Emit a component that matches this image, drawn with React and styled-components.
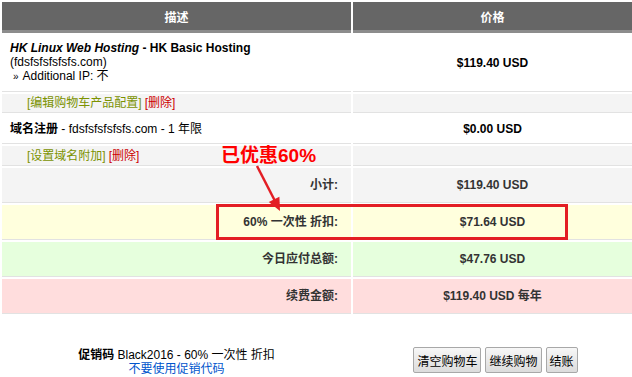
import { Fragment } from "react";
import styled, { createGlobalStyle } from "styled-components";

const GlobalStyle = createGlobalStyle`
  html, body {
    margin: 0;
    padding: 0;
    background: #fff;
    overflow: hidden;
  }
  body {
    font-family: "Liberation Sans", Arial, "Noto Sans CJK SC", sans-serif;
    font-size: 12px;
    color: #000;
  }
`;

const Page = styled.div`
  position: relative;
  width: 632px;
  height: 377px;
`;

const Cart = styled.div`
  display: grid;
  grid-template-columns: 349px 279px;
  gap: 2px;
  padding: 2px 0 0 2px;
`;

const HeadCell = styled.div`
  height: 28px;
  background: #666;
  border-bottom: 3px solid #8c8c8c;
  color: #fff;
  font-weight: bold;
  display: flex;
  align-items: center;
  justify-content: center;
  font-size: 12px;
`;

const Cell = styled.div`
  background: ${(p) => p.$bg || "#fff"};
  border-bottom: 1px solid #e2e2e2;
  line-height: 14px;
  padding: ${(p) => p.$pad || "7px 8px"};
  display: flex;
  flex-direction: column;
  justify-content: center;
  align-items: ${(p) =>
    p.$align === "center" ? "center" : p.$align === "right" ? "flex-end" : "flex-start"};
  font-weight: ${(p) => (p.$bold ? "bold" : "normal")};
  color: ${(p) => p.$color || "#000"};
`;

const Addon = styled.div`
  padding-left: 3px;
  span {
    font-size: 10px;
    margin-right: 4px;
  }
`;

const EditLink = styled.a`
  color: #7b9200;
  text-decoration: none;
`;

const RemoveLink = styled.a`
  color: #cc0000;
  text-decoration: none;
  margin-left: 3px;
`;

const Footer = styled.div`
  display: grid;
  grid-template-columns: 349px 279px;
  gap: 2px;
  padding-left: 2px;
  margin-top: 33px;
`;

const Promo = styled.div`
  text-align: center;
  line-height: 14px;
  padding-top: 1px;
  color: #000;
`;

const PromoLink = styled.a`
  display: block;
  color: #0055cc;
  text-decoration: none;
`;

const Buttons = styled.div`
  display: flex;
  justify-content: center;
  gap: 4px;
  padding-left: 6px;
`;

const Button = styled.button`
  height: 26px;
  padding: 0 3px;
  font-family: "Liberation Sans", "Noto Sans CJK SC", sans-serif;
  font-size: 12px;
  color: #000;
  border: 1px solid #a8a8a8;
  border-radius: 2px;
  background: linear-gradient(#f7f7f7, #dcdcdc);
  cursor: pointer;
`;

const Note = styled.div`
  position: absolute;
  left: 221px;
  top: 146px;
  color: #ff0000;
  font-weight: bold;
  font-size: 19px;
  line-height: 20px;
`;

const Highlight = styled.div`
  position: absolute;
  left: 216px;
  top: 204px;
  width: 352px;
  height: 36px;
  box-sizing: border-box;
  border: 3px solid #e31e24;
`;

const Arrow = styled.svg`
  position: absolute;
  left: 250px;
  top: 160px;
`;

const summary = [
  { label: "小计:", value: "$119.40 USD", bg: "#f4f4f4" },
  { label: "60% 一次性 折扣:", value: "$71.64 USD", bg: "#ffffdd" },
  { label: "今日应付总额:", value: "$47.76 USD", bg: "#e6ffdd" },
  { label: "续费金额:", value: "$119.40 USD 每年", bg: "#ffdddd" },
];

export default function App() {
  return (
    <Page>
      <GlobalStyle />
      <Cart>
        <HeadCell>描述</HeadCell>
        <HeadCell>价格</HeadCell>

        <Cell $pad="6px 8px 7px">
          <div>
            <strong>
              <em>HK Linux Web Hosting</em> - HK Basic Hosting
            </strong>
          </div>
          <div>(fdsfsfsfsfsfs.com)</div>
          <Addon>
            <span>»</span>Additional IP: 不
          </Addon>
        </Cell>
        <Cell $align="center" $bold>
          $119.40 USD
        </Cell>

        <Cell $bg="#f4f4f4" $pad="2px 25px 2px">
          <div>
            <EditLink href="#">[编辑购物车产品配置]</EditLink>
            <RemoveLink href="#">[删除]</RemoveLink>
          </div>
        </Cell>
        <Cell $bg="#f4f4f4" />

        <Cell>
          <div>
            <strong>域名注册</strong> - fdsfsfsfsfsfs.com - 1 年限
          </div>
        </Cell>
        <Cell $align="center" $bold>
          $0.00 USD
        </Cell>

        <Cell $bg="#f4f4f4" $pad="3px 25px 2px">
          <div>
            <EditLink href="#">[设置域名附加]</EditLink>
            <RemoveLink href="#">[删除]</RemoveLink>
          </div>
        </Cell>
        <Cell $bg="#f4f4f4" />

        {summary.map((row) => (
          <Fragment key={row.label}>
            <Cell $bg={row.bg} $align="right" $bold $color="#333" $pad="10px 13px">
              {row.label}
            </Cell>
            <Cell $bg={row.bg} $align="center" $bold $color="#333" $pad="10px 8px">
              {row.value}
            </Cell>
          </Fragment>
        ))}
      </Cart>

      <Footer>
        <Promo>
          <strong>促销码</strong> Black2016 - 60% 一次性 折扣
          <PromoLink href="#">不要使用促销代码</PromoLink>
        </Promo>
        <Buttons>
          <Button>清空购物车</Button>
          <Button>继续购物</Button>
          <Button>结账</Button>
        </Buttons>
      </Footer>

      <Note>已优惠60%</Note>
      <Arrow width="40" height="56" viewBox="0 0 40 56">
        <line x1="7" y1="6" x2="25" y2="41" stroke="#e31e24" strokeWidth="2.5" />
        <polygon points="30,51 18.8,42.1 29.4,36.7" fill="#e31e24" />
      </Arrow>
      <Highlight />
    </Page>
  );
}
